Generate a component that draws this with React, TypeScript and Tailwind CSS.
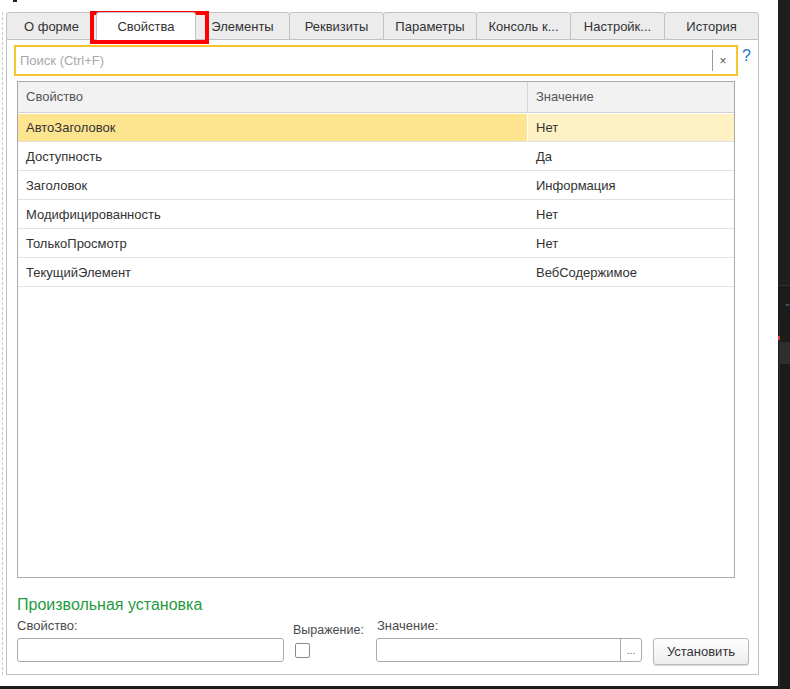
const tabs = [
  { label: "О форме", w: "w-[91px]" },
  { label: "Свойства", w: "w-[100px]", active: true },
  { label: "Элементы", w: "w-[95px]" },
  { label: "Реквизиты", w: "w-[95px]" },
  { label: "Параметры", w: "w-[94px]" },
  { label: "Консоль к...", w: "w-[95px]" },
  { label: "Настройк...", w: "w-[95px]" },
  { label: "История", w: "w-[95px]" },
];

const rows = [
  ["АвтоЗаголовок", "Нет"],
  ["Доступность", "Да"],
  ["Заголовок", "Информация"],
  ["Модифицированность", "Нет"],
  ["ТолькоПросмотр", "Нет"],
  ["ТекущийЭлемент", "ВебСодержимое"],
];

export default function App() {
  return (
    <div className="flex w-[790px] h-[689px] bg-[#1b1b1b] overflow-hidden font-['Liberation_Sans',Arial,sans-serif] text-[13px] text-[#333]">
      <div className="relative w-[778px] h-[686px] bg-white">
        {/* little dark mark at the top */}
        <div className="absolute left-[13px] top-0 w-[4px] h-[2px] bg-[#222]" />

        <div className="mt-[12px] ml-[2px] pl-[3px] border-l border-dashed border-[#c8c8c8] w-[757px]">
          <div className="w-[753px] flex flex-col">
            {/* Tabs */}
            <div className="flex h-[28px]">
              {tabs.map((t, i) => (
                <div
                  key={t.label}
                  className={`${t.w} ${i > 0 ? "-ml-px" : ""} h-[28px] pt-px flex items-center justify-center border border-[#c2c2c2] rounded-t-[3px] whitespace-nowrap ${
                    t.active ? "bg-white border-b-white relative z-10" : "bg-[#ececec]"
                  }`}
                >
                  {t.label}
                </div>
              ))}
            </div>

            {/* Body */}
            <div className="h-[635px] border-l border-r border-b border-[#c2c2c2] flex flex-col">
              {/* Search */}
              <div className="mt-[5px] ml-[7px] flex items-start">
                <div className="w-[724px] h-[31px] border-2 border-[#f6c62b] flex items-center">
                  <span className="flex-1 pl-[4px] text-[#a8a8a8]">Поиск (Ctrl+F)</span>
                  <div className="w-px h-[21px] bg-[#9a9a9a]" />
                  <span className="w-[20px] text-center text-[12px] text-[#555]">×</span>
                  <div className="w-[3px]" />
                </div>
                <span className="ml-[4px] -mt-[1px] text-[16px] text-[#1c74c4]">?</span>
              </div>

              {/* Table */}
              <div className="mt-[5px] ml-[10px] w-[718px] h-[497px] border border-[#a9a9a9] flex flex-col">
                <div className="h-[31px] flex bg-[#f2f2f2] border-b border-[#d2d2d2] text-[#555]">
                  <div className="w-[510px] border-r border-[#d6d6d6] flex items-center pl-[8px]">Свойство</div>
                  <div className="flex-1 flex items-center pl-[8px]">Значение</div>
                </div>
                {rows.map(([k, v], i) => (
                  <div key={k} className="h-[29px] pt-px flex border-b border-[#e2e2e2]">
                    <div className={`w-[510px] flex items-center pl-[8px] ${i === 0 ? "bg-[#fde48f] border-r border-white" : ""}`}>{k}</div>
                    <div className={`flex-1 flex items-center pl-[8px] ${i === 0 ? "bg-[#fef1c4]" : ""}`}>{v}</div>
                  </div>
                ))}
              </div>

              {/* Custom setting */}
              <div className="mt-[17px] ml-[10px] h-[20px] leading-[20px] text-[16px] text-[#1f9b3f]">Произвольная установка</div>
              <div className="mt-[3px] ml-[10px] flex items-start">
                <div className="w-[267px] flex flex-col">
                  <span className="h-[16px] leading-[16px] text-[#4a4a4a]">Свойство:</span>
                  <div className="mt-[4px] h-[24px] border border-[#a9a9a9] rounded-[3px]" />
                </div>
                <div className="ml-[9px] w-[83px] pt-[4px] flex flex-col">
                  <span className="h-[16px] leading-[16px] text-[12.5px] whitespace-nowrap text-[#4a4a4a]">Выражение:</span>
                  <div className="mt-[5px] ml-[2px] w-[15px] h-[15px] border border-[#8a8a8a] rounded-[2px]" />
                </div>
                <div className="w-[266px] flex flex-col">
                  <span className="h-[16px] leading-[16px] pl-px text-[#4a4a4a]">Значение:</span>
                  <div className="mt-[4px] h-[24px] border border-[#a9a9a9] rounded-[3px] flex">
                    <div className="flex-1" />
                    <div className="w-[21px] border-l border-[#a9a9a9] flex items-center justify-center text-[10px] text-[#666]">...</div>
                  </div>
                </div>
                <button className="ml-[11px] mt-[20px] w-[96px] h-[27px] border border-[#b8b8b8] rounded-[3px] bg-gradient-to-b from-white to-[#ececec] shadow-[0_1px_1px_rgba(0,0,0,0.15)] text-[13px] text-[#333]">
                  Установить
                </button>
              </div>
            </div>
          </div>
        </div>

        {/* Highlight frame around the active tab */}
        <div className="absolute left-[90px] top-[11px] w-[119px] h-[33px] border-4 border-[#ff0000]" />
      </div>

      {/* Dark strip on the right */}
      <div className="relative w-[12px] h-[689px]">
        <div className="h-[285px] bg-[#1e1e1e]" />
        <div className="h-px bg-[#303030]" />
        <div className="absolute left-[6px] top-[300px] text-[8px] leading-none text-[#6b8aa6]">⌄</div>
        <div className="absolute left-[1px] top-[320px] w-px h-[369px] bg-[#2e2e2e]" />
        <div className="absolute left-0 top-[336px] w-[2px] h-[4px] bg-[#e23b3b]" />
        <div className="absolute left-[2px] top-[342px] w-[10px] h-[22px] bg-[#2e2e2e]" />
      </div>
    </div>
  );
}
